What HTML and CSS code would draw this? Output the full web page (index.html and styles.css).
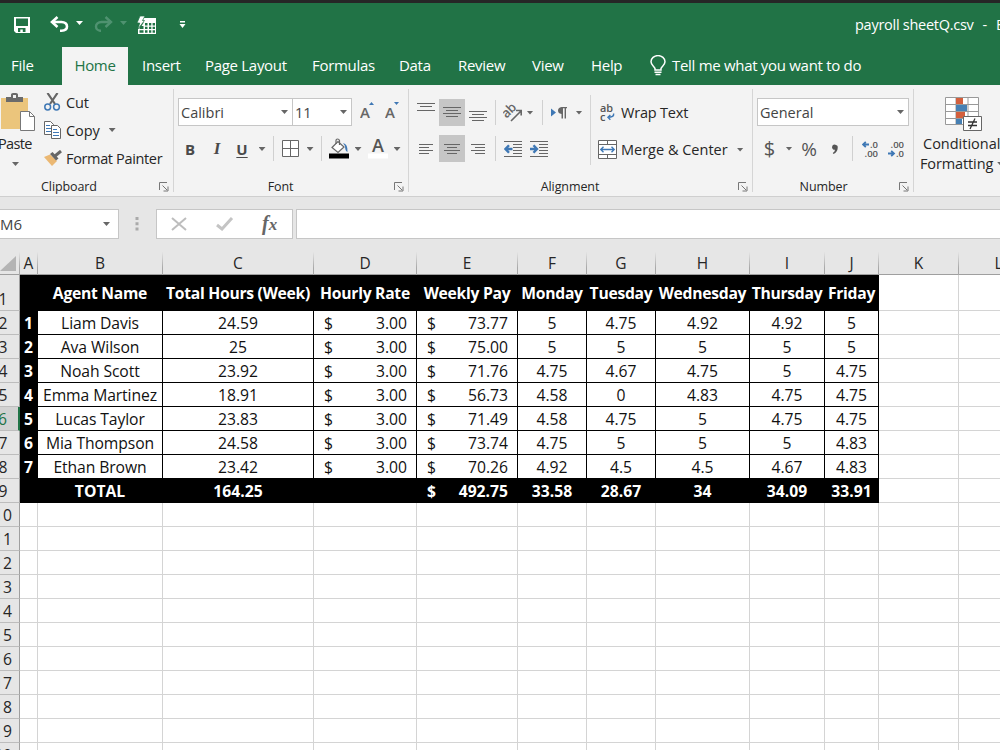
FILE: index.html
```html
<!DOCTYPE html>
<html lang="en">
<head>
<meta charset="utf-8">
<title>payroll sheetQ.csv</title>
<link rel="stylesheet" href="styles.css">
</head>
<body>
<div class="app">
  <header class="titlebar">
    <div class="quick">
      <svg width="16" height="16" viewBox="0 0 16 16"><path fill="#fff" fill-rule="evenodd" d="M0 0H16V16H2L0 14ZM2 1.500V9H14V1.500ZM4 11V15H6.300V12.500H8.800V15H11.500V11Z"/></svg>
      <svg width="19" height="17" viewBox="0 0 19 17" fill="none" stroke="#fff"><path stroke-width="2.6" d="M2 6H11.5C15 6 17 8 17 10.5S15 14.6 11.5 14.7H10"/><path stroke-width="2.6" d="M7.5 1L2 6L7.5 11"/></svg>
      <i class="caret white"></i>
      <svg width="19" height="17" viewBox="0 0 19 17" fill="none" stroke="#4f9270"><path stroke-width="2.4" d="M17 6H7.5C4 6 2 8 2 10.5S4 14.6 6 14.7H7"/><path stroke-width="2.4" d="M11.5 1L17 6L11.5 11"/></svg>
      <i class="caret faded"></i>
      <svg width="19" height="18" viewBox="0 0 19 18"><path fill="#fff" fill-rule="evenodd" d="M6 2H19V18H1V11H2.5V13H6.5V10H4.5L6.5 7ZM8 7V9.5H10.5V7ZM12 7V9.5H14.3V7ZM15.6 7V9.5H18V7ZM8 10.8V13H10.5V10.8ZM12 10.8V13H14.3V10.8ZM15.6 10.8V13H18V10.8ZM2.5 14.3V16.8H6.5V14.3ZM8 14.3V16.8H10.5V14.3ZM12 14.3V16.8H14.3V14.3ZM15.6 14.3V16.8H18V14.3Z"/><path fill="#fff" stroke="#217346" stroke-width=".7" d="M3 0H8L5.5 4.5H7.5L1 13L2.7 7H0Z"/></svg>
      <svg width="7" height="8" viewBox="0 0 7 8"><path fill="#fff" d="M1 0H6V1.4H1ZM.5 3H6.5L3.5 7Z"/></svg>
    </div>
    <div class="doc">payroll sheetQ.csv<span class="dash">-</span>Excel</div>
  </header>
  <nav class="tabs">
    <span>File</span><span class="active">Home</span><span>Insert</span><span>Page Layout</span><span>Formulas</span><span>Data</span><span>Review</span><span>View</span><span>Help</span>
    <svg width="16" height="21" viewBox="0 0 16 21" fill="none" stroke="#fff" stroke-width="1.5"><path d="M5 15V13.5C4.500 11.500 1 10 1 6.800A6.800 6 0 0 1 15 6.800C15 10 11.500 11.500 11 13.500V15Z"/><path d="M4.500 17.300H11.500M5.500 19.500H10.500"/></svg>
    <span class="tell">Tell me what you want to do</span>
  </nav>

  <section class="ribbon">
    <div class="group clipboard">
      <div class="paste">
        <svg width="35" height="39" viewBox="0 0 35 39"><path fill="#ebc57c" d="M1 5H28V36H1Z"/><path fill="#6b6b6b" d="M6 4H11V1.500Q11 0 13 0H16Q18 0 18 1.500V4H23V9H6Z"/><path fill="#f3f3f3" d="M13 2H16V5H13Z"/><path fill="#fff" stroke="#777" d="M20.500 18.500H29.500L34.500 23.500V37.500H20.500Z"/><path fill="none" stroke="#777" d="M29.500 18.500V23.500H34.500"/></svg>
        <span>Paste</span><i class="caret"></i>
      </div>
      <div class="clip-list">
        <div><svg width="18" height="18" viewBox="0 0 18 18" fill="none"><path stroke="#666" stroke-width="2.200" d="M3.500 0L11 11M13.500 0L6 11"/><circle cx="3.700" cy="14" r="2.900" stroke="#3f78b5" stroke-width="1.500"/><circle cx="12.500" cy="14" r="2.900" stroke="#3f78b5" stroke-width="1.500"/></svg><span class="cut">Cut</span></div>
        <div><svg width="18" height="18" viewBox="0 0 18 18"><path fill="#fff" stroke="#666" d="M.5.500H6.500L9.500 3.500V13.500H.5Z"/><path stroke="#3f78b5" d="M2 4.500H6M2 7.500H7M2 10.500H7"/><path fill="#fff" stroke="#666" d="M7.500 4.500H13.500L16.500 7.500V17.500H7.500Z"/><path stroke="#3f78b5" d="M9 8.500H13M9 11.500H15M9 14.500H15"/></svg><span class="copy">Copy</span><i class="caret"></i></div>
        <div><svg width="18" height="16" viewBox="0 0 18 16"><path fill="#ebb873" d="M0 7L6 4.500L13 11L8 16Z"/><path fill="#666" d="M6 4L8.500 2L14.500 8.500L12 10.500Z"/><path stroke="#666" stroke-width="3" d="M11 6L17 1"/></svg><span class="fp">Format Painter</span></div>
      </div>
      <div class="label">Clipboard</div><svg class="launch" width="10" height="10" viewBox="0 0 10 10" fill="none" stroke="#777"><path d="M.5 8V.5H8M3.500 3.500L8 8M9 4.500V9H4.500"/></svg>
    </div>

    <div class="group font">
      <div class="line combos"><div class="combo face">Calibri<i class="caret"></i></div><div class="combo size">11<i class="caret"></i></div>
        <svg width="14" height="17" viewBox="0 0 14 17"><text x="0" y="16" class="ico-a">A</text><path fill="#3f78b5" d="M9 3L11.500 0L14 3Z"/></svg>
        <svg width="14" height="17" viewBox="0 0 14 17"><text x="0" y="16" class="ico-a">A</text><path fill="#3f78b5" d="M9 0H14L11.500 3Z"/></svg></div>
      <div class="line font-tools"><b>B</b><b class="italic">I</b><b class="under">U</b><i class="caret"></i><i class="sep"></i>
        <svg width="17" height="17" viewBox="0 0 17 17" fill="#fff" stroke="#666"><path d="M.5.500H16.500V16.500H.5ZM8.500.500V16.500M.5 8.500H16.500"/></svg><i class="caret"></i><i class="sep"></i>
        <svg width="20" height="21" viewBox="0 0 20 21"><path fill="#fff" stroke="#666" stroke-width="1.200" d="M3 9.500L9 3.500L15 9L9 14.500Z"/><path fill="none" stroke="#666" stroke-width="1.200" d="M7 6V2.500Q7 1 8.500 1T10.500 2.500V7"/><path fill="#3f78b5" d="M14 5Q19 6 18.500 14Q16 13 16 8Z"/><path d="M0 15.500H20V20.500H0Z"/></svg><i class="caret"></i>
        <svg width="20" height="21" viewBox="0 0 20 21"><text x="10" y="14" text-anchor="middle" class="ico-color">A</text><path fill="#fff" d="M0 15.500H20V20.500H0Z"/></svg><i class="caret"></i></div>
      <div class="label">Font</div><svg class="launch" width="10" height="10" viewBox="0 0 10 10" fill="none" stroke="#777"><path d="M.5 8V.5H8M3.500 3.500L8 8M9 4.500V9H4.500"/></svg>
    </div>

    <div class="group align">
      <div class="align-left">
        <div class="line align-top">
          <svg width="18" height="20" viewBox="0 0 18 20" stroke="#666"><path d="M0 .5H18M3 3.500H15M0 7.500H18"/></svg>
          <span class="pressed"><svg width="18" height="20" viewBox="0 0 18 20" stroke="#666"><path d="M0 4.500H18M3 7.500H15M0 10.500H18M3 13.500H15"/></svg></span>
          <svg width="18" height="20" viewBox="0 0 18 20" stroke="#666"><path d="M0 8.500H18M3 11.500H15M0 14.500H18M3 17.500H15"/></svg>
          <i class="sep"></i>
          <svg width="19" height="20" viewBox="0 0 19 20"><text x="0" y="13" class="ico-ab" transform="rotate(-45 5 10)">ab</text><path fill="none" stroke="#666" stroke-width="1.600" d="M8 18L18 8M13 7.500H18.200V12.500"/></svg>
          <i class="caret"></i><i class="sep"></i>
          <svg width="17" height="14" viewBox="0 0 17 14"><path fill="#3f78b5" d="M0 2.500L5 6.500L0 10.500Z"/><path fill="#666" d="M10.500 8Q7 7.500 7 4.500T10.500 1H16V2.200H15V12.500H13.600V2.200H12V12.500H10.500Z"/></svg>
          <i class="caret"></i>
        </div>
        <div class="line align-bottom">
          <svg width="15" height="12" viewBox="0 0 15 12" stroke="#666"><path d="M0 1.500H14M0 4.500H10M0 7.500H14M0 10.500H10"/></svg>
          <span class="pressed"><svg width="16" height="12" viewBox="0 0 16 12" stroke="#666"><path d="M0 1.500H16M3 4.500H13M0 7.500H16M3 10.500H13"/></svg></span>
          <svg width="15" height="12" viewBox="0 0 15 12" stroke="#666"><path d="M0 1.500H14M4 4.500H14M0 7.500H14M4 10.500H14"/></svg>
          <i class="sep"></i>
          <svg width="18" height="17" viewBox="0 0 18 17"><path stroke="#666" d="M0 1.500H18M9 4.500H18M9 7.500H18M9 10.500H18M9 13.500H18M0 16.500H18"/><path stroke="#3f78b5" stroke-width="2.400" fill="none" d="M8.500 9H1.500M5 5.200L1.500 9L5 12.800"/></svg>
          <svg width="18" height="17" viewBox="0 0 18 17"><path stroke="#666" d="M0 1.500H18M9 4.500H18M9 7.500H18M9 10.500H18M9 13.500H18M0 16.500H18"/><path stroke="#3f78b5" stroke-width="2.400" fill="none" d="M0 9H7M3.500 5.200L7 9L3.500 12.800"/></svg>
        </div>
      </div>
      <div class="align-right">
        <div class="line"><svg width="20" height="20" viewBox="0 0 20 20"><text x="2" y="9" class="ico-wrap">ab</text><text x="2" y="18" class="ico-wrap">c</text><path fill="none" stroke="#3f78b5" stroke-width="1.500" d="M16.500 10.500Q17 14.500 10.500 14.500M13 12L10.500 14.500L13 17"/></svg><span class="wrap">Wrap Text</span></div>
        <div class="line"><svg width="19" height="19" viewBox="0 0 19 19"><path fill="#fff" stroke="#666" d="M.5.500H18.500V18.500H.5ZM.5 4.500H18.500M.5 14.500H18.500M9.500.500V4.500M9.500 14.500V18.500"/><path fill="none" stroke="#3f78b5" stroke-width="1.400" d="M3 9.500H16M5.500 6.800L2.800 9.500L5.500 12.200M13.500 6.800L16.200 9.500L13.500 12.200"/></svg><span class="merge">Merge &amp; Center</span><i class="caret"></i></div>
      </div>
      <div class="label">Alignment</div><svg class="launch" width="10" height="10" viewBox="0 0 10 10" fill="none" stroke="#777"><path d="M.5 8V.5H8M3.500 3.500L8 8M9 4.500V9H4.500"/></svg>
    </div>

    <div class="group number">
      <div class="line combos"><div class="combo general">General<i class="caret"></i></div></div>
      <div class="line number-tools"><span class="dollar">$</span><i class="caret"></i><span class="pct">%</span>
        <svg width="8" height="12" viewBox="0 0 8 12"><path fill="#555" d="M1 4A2.700 2.700 0 1 1 6.700 5Q6.500 9 2.500 11L1.800 10Q4 8.500 4 6.800Q1.200 7 1 4Z"/></svg><i class="sep"></i>
        <svg width="16" height="18" viewBox="0 0 16 18"><text x="16" y="8" text-anchor="end" class="ico-num">.0</text><text x="16" y="17" text-anchor="end" class="ico-num">.00</text><path fill="none" stroke="#3f78b5" stroke-width="1.800" d="M7 4.500H1M3.800 1.800L1 4.500L3.800 7.200"/></svg>
        <svg width="16" height="18" viewBox="0 0 16 18"><text x="16" y="8" text-anchor="end" class="ico-num">.00</text><text x="16" y="17" text-anchor="end" class="ico-num">.0</text><path fill="none" stroke="#3f78b5" stroke-width="1.800" d="M0 13.500H6M3.200 10.800L6 13.500L3.200 16.200"/></svg></div>
      <div class="label">Number</div><svg class="launch" width="10" height="10" viewBox="0 0 10 10" fill="none" stroke="#777"><path d="M.5 8V.5H8M3.500 3.500L8 8M9 4.500V9H4.500"/></svg>
    </div>

    <div class="group styles">
      <svg width="38" height="35" viewBox="0 0 38 35"><path fill="#fff" stroke="#999" d="M.5.500H33.500V27.500H.5ZM11 .5V27.500M23 .5V27.500M.5 7.500H33.500M.5 14.500H33.500M.5 21.500H33.500"/><path fill="#d35f3d" d="M11 1H18V7H11ZM11 15H20V21H11Z"/><path fill="#4680b4" d="M11 8H22V14H11ZM11 22H17V27H11Z"/><path fill="#fff" stroke="#666" d="M18.500 19.500H36.500V33.500H18.500Z"/><path fill="none" stroke="#333" stroke-width="1.300" d="M23 25H32M23 28.500H32M30 21.500L25 32"/></svg>
      <span class="cond">Conditional</span><div class="fmt"><span>Formatting</span><i class="caret"></i></div>
    </div>
  </section>

  <section class="formula">
    <div class="namebox"><span>M6</span><i class="caret"></i></div>
    <svg width="4" height="14" viewBox="0 0 4 14"><path fill="#aaa" d="M.5 0H3.500V3H.5ZM.5 5.300H3.500V8.300H.5ZM.5 10.600H3.500V13.600H.5Z"/></svg>
    <div class="fx">
      <svg width="16" height="14" viewBox="0 0 16 14" fill="none" stroke="#bdbdbd" stroke-width="2"><path d="M1 1L15 13M15 1L1 13"/></svg>
      <svg width="18" height="14" viewBox="0 0 18 14" fill="none" stroke="#c4c4c4" stroke-width="3"><path d="M1 8L6 12L16 1"/></svg>
      <em><span>f</span>x</em>
    </div>
    <div class="input"></div>
  </section>

  <main class="sheet" id="sheet"></main>
</div>
<script src="sheet.js"></script>
</body>
</html>
```
FILE: styles.css
```css
* { box-sizing: border-box; }
body { margin: 0; width: 1000px; height: 750px; overflow: hidden; font-family: "Open Sans", "Noto Sans", sans-serif; font-size: 14.5px; color: #262626; background: #e6e6e6; }
svg { display: block; flex: none; }
span { white-space: nowrap; }
.app { width: 1000px; height: 750px; overflow: hidden; display: flex; flex-direction: column; border-top: 3px solid #262626; }

.caret { width: 7px; height: 4px; flex: none; background: #666; clip-path: polygon(0 0, 100% 0, 50% 100%); }
.caret.white { background: #fff; }
.caret.faded { background: #4f9270; }
.sep { width: 1px; height: 25px; background: #d0d0d0; }

.titlebar { height: 44px; flex: none; background: #217346; color: #fff; display: flex; justify-content: space-between; overflow: hidden; }
.quick { display: grid; grid-template-columns: 36px 26px 18px 26px 17px 42px 35px; padding-left: 14px; padding-bottom: 1px; align-items: center; }
.quick svg, .quick .caret { justify-self: start; }
.quick .caret { margin-top: -3px; }
.doc { width: 145px; line-height: 43px; white-space: nowrap; font-size: 14.5px; letter-spacing: -0.27px; }
.dash { margin: 0 9px; }

.tabs { height: 38px; flex: none; background: #217346; color: #fff; display: grid; grid-template-columns: 51px 66px 14px 63px 107px 87px 59px 74px 59px 60px 21px 1fr; padding-left: 11px; align-items: center; letter-spacing: -0.3px; font-size: 15px; line-height: 36px; }
.tabs > span { height: 38px; }
.tabs .active { background: #f3f3f3; color: #217346; text-align: center; }
.tabs .active + span { grid-column: 4; }
.tabs svg { margin: -2px 0 0 -1px; }

.ribbon { height: 112px; flex: none; background: #f3f3f3; border-bottom: 1px solid #cfcfcf; display: flex; }
.group { position: relative; height: 111px; flex: none; }
.group::after { content: ""; position: absolute; right: 0; top: 4px; width: 1px; height: 103px; background: #d5d5d5; }
.styles.group::after { content: none; }
.label { position: absolute; left: 0; right: 0; bottom: 0; text-align: center; font-size: 12.5px; line-height: 19px; letter-spacing: -0.1px; }
.launch { position: absolute; right: 5px; bottom: 4px; }
.line { height: 27px; display: grid; align-items: center; justify-items: center; }

.clipboard { width: 174px; display: flex; }
.clipboard .label { right: 36px; }
.paste { width: 36px; padding-top: 8px; display: flex; flex-direction: column; }
.paste span { margin-left: -2px; line-height: 24px; letter-spacing: -0.65px; }
.paste .caret { margin: 6px 0 0 12px; }
.clip-list { padding: 3px 0 0 8px; }
.clip-list div { height: 28px; display: flex; align-items: center; gap: 4px; letter-spacing: -0.35px; }
.clip-list .cut, .clip-list .copy { letter-spacing: -0.1px; }
.clip-list svg { margin-left: 0; }
.clip-list .caret { margin-left: 5px; }

.font { width: 235px; padding: 13px 0 0 4px; }
.font .label { right: 22px; }
.combos { display: flex; }
.combo { height: 28px; border: 1px solid #c6c6c6; background: #fff; display: flex; align-items: center; justify-content: space-between; padding: 1px 4px 0 2px; color: #444; }
.face { width: 115px; }
.size { width: 60px; margin-left: -1px; }
.font .combos svg { margin: -3px 0 0 8px; }
.font .combos svg + svg { margin-left: 11px; }
.ico-a { font: 600 15px "Open Sans"; fill: #666; }
.font-tools { margin: 10px 0 0 -1px; grid-template-columns: 26px 28px 22px 18px 4px 31px 8px 14px 22px 16px 24px 14px; color: #4a4a4a; }
.font-tools b { font-size: 15px; padding-top: 1px; }
.font-tools .italic { font-family: "Liberation Serif", serif; font-style: italic; font-size: 17px; }
.font-tools .under { text-decoration: underline; text-underline-offset: 2px; }
.font-tools .caret { margin-top: 1px; }
.ico-color { font: 600 18px "Open Sans"; fill: #555; }

.align { width: 344px; display: flex; }
.align .label { right: 22px; }
.align-left { width: 182px; padding: 13px 0 0 5px; }
.align-left::after { content: ""; position: absolute; left: 181px; top: 10px; width: 1px; height: 70px; background: #d5d5d5; }
.align-top { grid-template-columns: 24px 28px 24px 10px 25px 10px 14px 21px 18px; padding-top: 1px; }
.align-bottom { grid-template-columns: 24px 28px 24px 10px 26px 26px; margin-top: 10px; }
.pressed { width: 26px; height: 27px; background: #c6c6c6; display: grid; place-items: center; }
.ico-ab { font: 600 13px "Open Sans"; fill: #666; letter-spacing: -0.5px; }
.ico-wrap { font: 600 11.5px "Open Sans"; fill: #555; }
.align-right { padding: 14px 0 0 7px; }
.align-right .line { display: flex; gap: 4px; }
.align-right .line + .line { margin-top: 10px; }
.align-right svg { width: 19px; }
.wrap { letter-spacing: -0.2px; }
.merge { letter-spacing: 0; }
.align-right .caret { margin-left: 5px; }

.number { width: 161px; padding: 13px 0 0 4px; }
.number .label { right: 20px; }
.general { width: 152px; }
.number-tools { margin: 10px 0 0 3px; grid-template-columns: 19px 20px 20px 31px 4px 32px 20px; color: #555; }
.dollar { font-size: 20px; }
.pct { font-size: 19px; }
.ico-num { font: 600 9.5px "Open Sans"; fill: #555; }

.styles { width: 110px; padding: 12px 0 0 6px; }
.styles svg { margin: 0 0 2px 25px; }
.cond { display: block; margin-left: 3px; line-height: 20px; }
.fmt { display: flex; align-items: center; gap: 4px; line-height: 20px; letter-spacing: -0.12px; }

.formula { height: 53px; flex: none; padding-top: 12px; display: flex; align-items: flex-start; }
.formula > div { flex: none; height: 30px; background: #fff; border: 1px solid #c6c6c6; display: flex; align-items: center; }
.formula .namebox { width: 119px; border-left: 0; justify-content: space-between; padding-right: 8px; color: #444; }
.namebox span { font-size: 15px; }
.formula > svg { margin: 8px 17px 0 16px; }
.fx { width: 137px; padding-left: 14px; }
.fx svg + svg { margin-left: 29px; }
.fx em { font: italic bold 17px "Liberation Serif", serif; color: #666; margin-left: 28px; line-height: 20px; }
.fx em span { font-size: 20px; }
.formula .input { width: 720px; margin-left: 3px; }

.sheet { width: 1065px; margin-left: -13px; background: #fff; font-size: 15.7px; color: #111; }
.row { display: grid; grid-template-columns: 33px 18px 125px 151px 103px 101px 69px 69px 94px 75px 54px 80px 80px; grid-template-rows: 100%; height: 24px; line-height: 24px; }
.row > div { border-right: 1px solid #d4d4d4; border-bottom: 1px solid #d4d4d4; text-align: center; white-space: nowrap; min-width: 0; min-height: 0; display: flex; justify-content: center; }
.row .head { background: #e6e6e6; border-color: #bdbdbd; border-right-color: #9f9f9f; color: #262626; }
.row .head.current { color: #217346; background: #d2d2d2; border-right: 2px solid #217346; }
.row.cols { height: 25px; line-height: 27px; font-size: 15.5px; background: linear-gradient(#9f9f9f, #9f9f9f) bottom / 100% 1px no-repeat #e6e6e6; }
.cols > div { border-bottom: 0; border-image: linear-gradient(#e6e6e6 10%, #a8a8a8 70%) 1; color: #262626; }
.cols .corner { justify-content: flex-end; align-items: flex-end; padding: 0 3px 4px 0; }
.corner::after { content: ""; width: 16px; height: 15px; background: #b4b4b4; clip-path: polygon(100% 0, 100% 100%, 0 100%); }
.row.titles { height: 36px; line-height: 37px; }
.titles .head { line-height: 48px; }
.row .data { border-color: #000; }
.row .black { background: #000; border-color: #000; color: #fff; font-weight: 700; }
.row .money { justify-content: space-between; padding: 0 9px 0 10px; }
.name { letter-spacing: -0.1px; }
.titles .black { letter-spacing: -0.28px; }
```
FILE: sheet.js
```js
const sheet = document.getElementById('sheet');

function addRow(cls, cells) {
  const row = document.createElement('div');
  row.className = 'row ' + cls;
  for (const [text, type] of cells) {
    const cell = document.createElement('div');
    cell.className = type;
    const parts = type.includes('money') ? ['$', text] : [text];
    for (const part of parts) {
      const span = document.createElement('span');
      span.textContent = part;
      cell.append(span);
    }
    row.append(cell);
  }
  sheet.append(row);
}

addRow('cols', [['', 'corner'], ...'ABCDEFGHIJKL'.split('').map(c => [c, ''])]);

const titles = ['', 'Agent Name', 'Total Hours (Week)', 'Hourly Rate', 'Weekly Pay', 'Monday', 'Tuesday', 'Wednesday', 'Thursday', 'Friday'];
addRow('titles', [['1', 'head'], ...titles.map(t => [t, 'black']), ['', ''], ['', '']]);

const agents = [
  ['Liam Davis', '24.59', '3.00', '73.77', '5', '4.75', '4.92', '4.92', '5'],
  ['Ava Wilson', '25', '3.00', '75.00', '5', '5', '5', '5', '5'],
  ['Noah Scott', '23.92', '3.00', '71.76', '4.75', '4.67', '4.75', '5', '4.75'],
  ['Emma Martinez', '18.91', '3.00', '56.73', '4.58', '0', '4.83', '4.75', '4.75'],
  ['Lucas Taylor', '23.83', '3.00', '71.49', '4.58', '4.75', '5', '4.75', '4.75'],
  ['Mia Thompson', '24.58', '3.00', '73.74', '4.75', '5', '5', '5', '4.83'],
  ['Ethan Brown', '23.42', '3.00', '70.26', '4.92', '4.5', '4.5', '4.67', '4.83'],
];
agents.forEach((agent, i) => addRow('', [
  [String(i + 2), i === 4 ? 'head current' : 'head'],
  [String(i + 1), 'black'],
  ...agent.map((v, c) => [v, c === 0 ? 'data name' : c === 2 || c === 3 ? 'data money' : 'data']),
  ['', ''], ['', ''],
]));

const totals = ['', 'TOTAL', '164.25', '', '492.75', '33.58', '28.67', '34', '34.09', '33.91'];
addRow('', [['9', 'head'], ...totals.map((v, c) => [v, !v || c !== 4 ? 'black' : 'black money']), ['', ''], ['', '']]);

for (let n = 10; n <= 20; n++) {
  addRow('', [[String(n), 'head'], ...Array(12).fill(['', ''])]);
}
```
